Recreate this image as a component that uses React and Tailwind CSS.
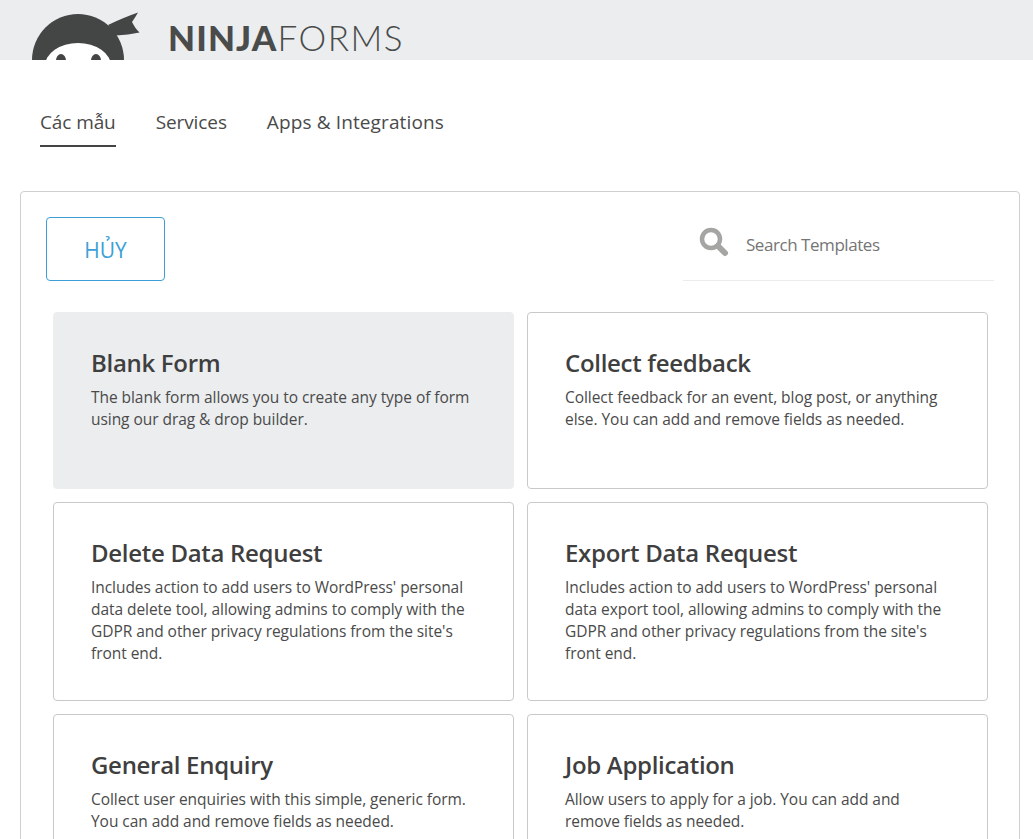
import React from "react";

function Card({ title, lines, active, className = "" }) {
  return (
    <div className={`rounded-[4px] pt-[34px] pl-[37px] pr-4 ${active ? "bg-[#ebedef] border border-[#ebedef]" : "bg-white border border-[#c9c9c9]"} ${className}`}>
      <h3 className="text-[24px] leading-[32px] font-semibold text-[#3f3f3f] tracking-[-0.3px]">{title}</h3>
      <p className="mt-[7px] text-[15.5px] leading-[22px] text-[#4a4a4a] tracking-[-0.05px]">
        {lines.map((l) => (
          <span key={l} className="block whitespace-nowrap">{l}</span>
        ))}
      </p>
    </div>
  );
}

function Logo() {
  return (
    <svg width="110" height="60" viewBox="0 0 110 60" className="shrink-0">
      <circle cx="46" cy="60" r="46" fill="#444545" />
      <path d="M76 25 C86 20 96 16 106 12.5 C104 16 102 19 100 22 C102 26 104 29 107.5 32.5 C100 34 92 35 84 35.5 Z" fill="#444545" />
      <ellipse cx="46" cy="66" rx="33" ry="23" fill="#ffffff" />
      <ellipse cx="29" cy="60.5" rx="5" ry="6.5" fill="#444545" />
      <ellipse cx="64" cy="60.5" rx="5" ry="6.5" fill="#444545" />
    </svg>
  );
}

export default function App() {
  return (
    <div className="h-[839px] overflow-hidden bg-white font-['Open_Sans','Noto_Sans',sans-serif]">
      <header className="h-[60px] overflow-hidden bg-[#ebedef] flex items-start">
        <div className="pl-[32px]"><Logo /></div>
        <div className="ml-[26px] mt-[17px] text-[35px] leading-[40px] text-[#4a4b4b] font-['Lato',sans-serif] whitespace-nowrap">
          <span className="font-black tracking-[1.1px]">NINJA</span>
          <span className="font-light tracking-[1.5px]">FORMS</span>
        </div>
      </header>

      <nav className="flex pl-10 pt-[47px] text-[#4a4a4a] text-[19px] leading-[30px] tracking-[-0.1px]">
        <div className="border-b-2 border-[#444] h-[40px]">Các mẫu</div>
        <div className="ml-10">Services</div>
        <div className="ml-10 tracking-[0.12px]">Apps &amp; Integrations</div>
      </nav>

      <main className="ml-5 mr-[13px] mt-[44px] border border-[#cfcfcf] rounded-[4px] px-[25px] pt-[25px]">
        <div className="flex items-start justify-between">
          <button className="w-[119px] h-[64px] rounded-[4px] border border-[#3d9fd6] text-[#3d9fd6] text-[21px] pt-[4px]">HỦY</button>
          <div className="w-[311px] h-[64px] border-b border-[#ececec] flex items-center pl-[16px] pb-[8px]">
            <svg width="30" height="30" viewBox="0 0 30 30" className="mt-[-5px]">
              <circle cx="12" cy="12" r="9" fill="none" stroke="#a5a5a3" strokeWidth="4.5" />
              <path d="M19 19 L26 26" stroke="#a5a5a3" strokeWidth="6" strokeLinecap="round" />
            </svg>
            <span className="ml-[17px] text-[#757575] text-[17px] tracking-[-0.45px]">Search Templates</span>
          </div>
        </div>

        <div className="mt-[31px] ml-[7px] mr-[6px] grid grid-cols-2 gap-[13px]">
          <Card active className="h-[177px]" title="Blank Form" lines={["The blank form allows you to create any type of form", "using our drag & drop builder."]} />
          <Card className="h-[177px]" title="Collect feedback" lines={["Collect feedback for an event, blog post, or anything", "else. You can add and remove fields as needed."]} />
          <Card className="h-[199px]" title="Delete Data Request" lines={["Includes action to add users to WordPress' personal", "data delete tool, allowing admins to comply with the", "GDPR and other privacy regulations from the site's", "front end."]} />
          <Card className="h-[199px]" title="Export Data Request" lines={["Includes action to add users to WordPress' personal", "data export tool, allowing admins to comply with the", "GDPR and other privacy regulations from the site's", "front end."]} />
          <Card className="h-[177px]" title="General Enquiry" lines={["Collect user enquiries with this simple, generic form.", "You can add and remove fields as needed."]} />
          <Card className="h-[177px]" title="Job Application" lines={["Allow users to apply for a job. You can add and", "remove fields as needed."]} />
        </div>
      </main>
    </div>
  );
}
